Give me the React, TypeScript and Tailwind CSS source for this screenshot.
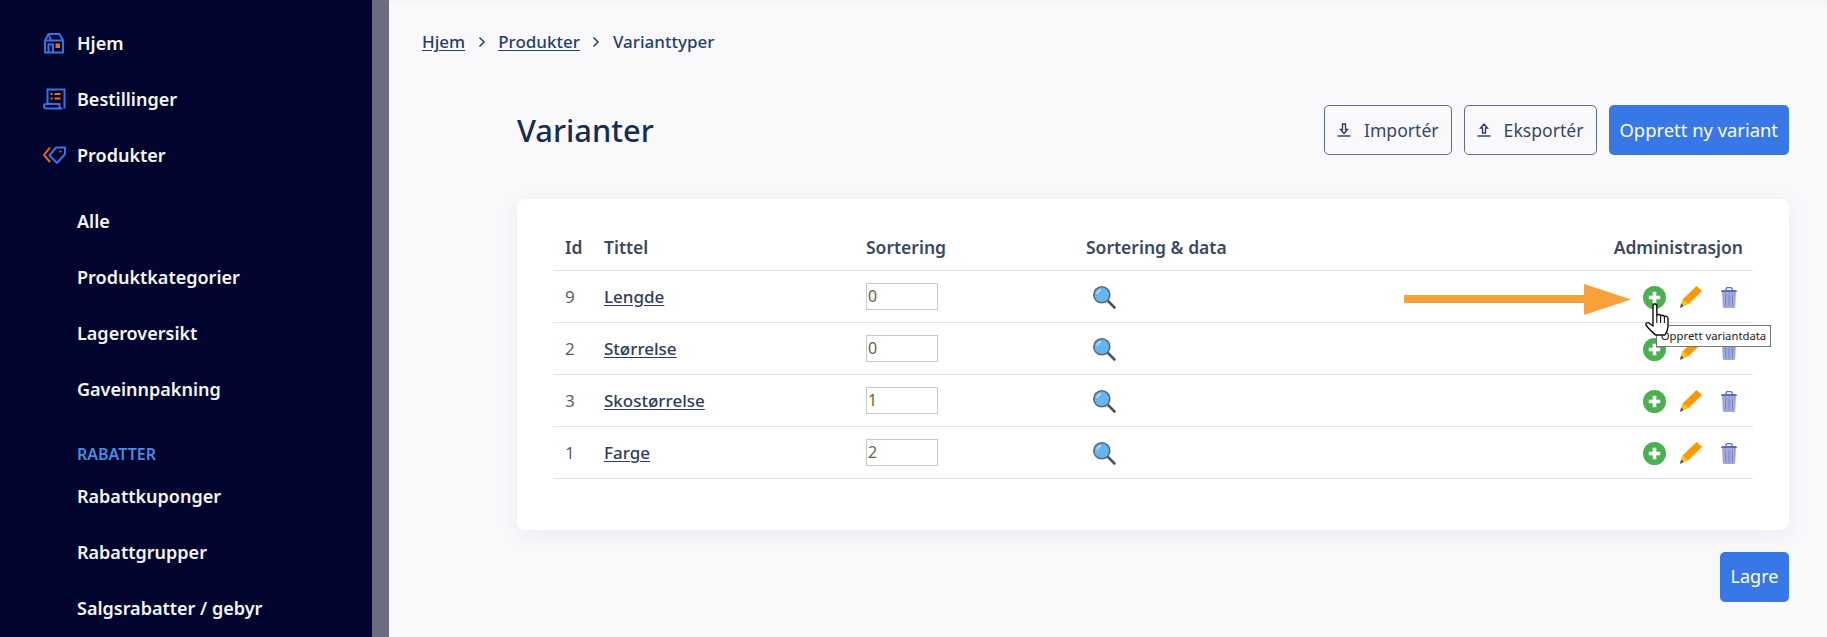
const sideMain = [
  { label: "Hjem", icon: <HomeIcon /> },
  { label: "Bestillinger", icon: <OrdersIcon /> },
  { label: "Produkter", icon: <TagIcon /> },
];
const sideProducts = ["Alle", "Produktkategorier", "Lageroversikt", "Gaveinnpakning"];
const sideDiscounts = ["Rabattkuponger", "Rabattgrupper", "Salgsrabatter / gebyr"];

const rows = [
  { id: 9, title: "Lengde", sort: "0" },
  { id: 2, title: "Størrelse", sort: "0" },
  { id: 3, title: "Skostørrelse", sort: "1" },
  { id: 1, title: "Farge", sort: "2" },
];

function HomeIcon() {
  return (
    <svg width="22" height="22" viewBox="0 0 22 22" fill="none">
      <path d="M2 8.5 5.5 2h11L20 8.5V20.5H2Z" stroke="#3474e0" strokeWidth="2" strokeLinejoin="round" />
      <path d="M2 8.5h18M5.5 2 8 8.5M5.5 20V12.5h4.5V20" stroke="#3474e0" strokeWidth="2" />
      <rect x="12.5" y="11.5" width="4.5" height="4.5" fill="#f26b0f" />
    </svg>
  );
}

function OrdersIcon() {
  return (
    <svg width="23" height="22" viewBox="0 0 23 22" fill="none">
      <path d="M4.5 16V1.5h17V20.5" stroke="#3474e0" strokeWidth="2" />
      <path d="M1 18c0-1.5.8-2 2-2h13.5v2.500c0 1.300.8 2 2 2H3c-1.300 0-2-1-2-2.500Z" stroke="#3474e0" strokeWidth="2" strokeLinejoin="round" />
      <path d="M7.500 6h2M11.500 6h6M7.500 10.500h2M11.500 10.500h6" stroke="#f26b0f" strokeWidth="2" />
    </svg>
  );
}

function TagIcon() {
  return (
    <svg width="23" height="18" viewBox="0 0 23 18" fill="none">
      <path d="M7 1.500 1 9l6 7" stroke="#f26b0f" strokeWidth="2" />
      <path d="M13 1.500h9v6.500l-8 9L6.500 9.500Z" stroke="#3474e0" strokeWidth="2" strokeLinejoin="round" />
      <circle cx="17.500" cy="5.500" r="1" fill="#f26b0f" />
    </svg>
  );
}

function PlusIcon() {
  return (
    <svg width="23" height="23" viewBox="0 0 23 23">
      <circle cx="11.500" cy="11.500" r="11.500" fill="#4caf50" />
      <path d="M9.700 5.800h3.600v3.900h3.900v3.600h-3.900v3.900H9.700v-3.900H5.800V9.700h3.900Z" fill="#fff" />
    </svg>
  );
}

function PencilIcon() {
  return (
    <svg width="22" height="22" viewBox="0 0 22 22">
      <path d="M16.500 0 22 5 8 18.500 2.500 13.500Z" fill="#ff9800" />
      <path d="M2.500 13.500 8 18.500 4 20 1 17.500Z" fill="#ffc107" />
      <path d="M1 17.500 4 20 0 22Z" fill="#4e4e4e" />
    </svg>
  );
}

function TrashIcon() {
  return (
    <svg width="16" height="21" viewBox="0 0 16 21">
      <path d="M1 5h14l-.8 14.500c0 .9-.6 1.500-1.500 1.500H3.300c-.9 0-1.500-.6-1.500-1.500Z" fill="#9fa8da" />
      <path d="M4.500 7.500v11M8 7.500v11M11.500 7.500v11" stroke="#7986cb" strokeWidth="1" />
      <path d="M0 5c0-1.200.6-2 1.800-2h12.400C15.400 3 16 3.800 16 5Z" fill="#5c6bc0" />
      <path d="M5 3.500V2c0-.8.5-1.300 1.300-1.300h3.400c.8 0 1.300.5 1.300 1.300v1.500" fill="none" stroke="#5c6bc0" strokeWidth="1.300" />
    </svg>
  );
}

function SearchIcon() {
  return (
    <svg width="23" height="23" viewBox="0 0 23 23">
      <path d="M13.500 13.500 21.500 21.500" stroke="#4a5560" strokeWidth="2.600" strokeLinecap="round" />
      <circle cx="8.800" cy="8.800" r="8" fill="#64b5f6" stroke="#5a6a78" strokeWidth="1.600" />
      <path d="M4 8a5 5 0 0 1 4-4" fill="none" stroke="#bbdefb" strokeWidth="1.500" />
    </svg>
  );
}

function HandCursor() {
  return (
    <svg width="27" height="34" viewBox="0 0 27 34">
      <path
        d="M8 3c0-2.600 3.800-2.600 3.800 0v9.500c.8-1.500 3.500-1.300 3.800.5.800-1.300 3.500-1 3.800.8.800-1 3.400-.7 3.600 1.400v8c0 3.500-1.300 6-3 8.800H10.500C7.500 29 4 26.500 1.300 22.500c-1.300-2 1-3.800 3-2.300L8 23Z"
        fill="#fff"
        stroke="#111"
        strokeWidth="1.400"
        strokeLinejoin="round"
      />
      <path d="M11.800 12.500V20M15.600 13v7M19.400 13.800V20" stroke="#111" strokeWidth="1.100" />
    </svg>
  );
}

function SideLink({ label, icon }: { label: string; icon?: React.ReactNode }) {
  return (
    <a className="flex h-14 items-center text-[18px] font-semibold text-[#f4f5fb]">
      <span className="flex w-[34px] items-center">{icon}</span>
      {label}
    </a>
  );
}

function OutlineButton({ label, up }: { label: string; up?: boolean }) {
  return (
    <button className="flex h-[50px] items-center gap-[13px] rounded-[5px] border border-[#5d6b8c] pl-[12px] pr-[12px] text-[17.6px] text-[#37466b]">
      <svg width="14" height="14" viewBox="0 0 14 14" fill="none" stroke="#26385f">
        <path d="M0.500 13h13" strokeWidth="1.400" />
        {up ? (
          <path d="M7 1 10.500 5H8.500V10h-3V5H3.500Z" strokeWidth="1.300" />
        ) : (
          <path d="M7 10.500 10.500 6.500H8.500V1h-3V6.500H3.500Z" strokeWidth="1.300" />
        )}
      </svg>
      {label}
    </button>
  );
}

export default function App() {
  return (
    <div
      className="flex h-[637px] w-[1827px] overflow-hidden bg-[#f9f9fc]"
      style={{ fontFamily: '"Noto Sans", sans-serif' }}
    >
      {/* sidebar */}
      <aside className="h-full w-[372px] shrink-0 bg-[#02062e] pl-[43px] pt-[15px]">
        {sideMain.map((item) => (
          <SideLink key={item.label} label={item.label} icon={item.icon} />
        ))}
        <div className="mt-[10px]">
          {sideProducts.map((label) => (
            <SideLink key={label} label={label} />
          ))}
        </div>
        <div className="ml-[34px] mt-[25px] flex h-[24px] items-center text-[16px] font-semibold text-[#4c8ade]">
          RABATTER
        </div>
        <div className="mt-[2px]">
          {sideDiscounts.map((label) => (
            <SideLink key={label} label={label} />
          ))}
        </div>
      </aside>
      <div className="h-full w-[17px] shrink-0 bg-[#6b6c7e]" />

      {/* main */}
      <main className="flex-1 pr-[38px] shadow-[inset_0_6px_6px_-6px_rgba(0,0,0,0.06)]">
        <nav className="flex h-[84px] items-center pl-[33px] text-[17px] font-medium text-[#24406f]">
          <a className="underline underline-offset-2">Hjem</a>
          <svg className="mx-[12.5px]" width="8" height="12" viewBox="0 0 8 12" fill="none" stroke="#24406f" strokeWidth="1.500">
            <path d="m1.500 1.500 4.500 4.500-4.500 4.500" />
          </svg>
          <a className="underline underline-offset-2">Produkter</a>
          <svg className="mx-[12.5px]" width="8" height="12" viewBox="0 0 8 12" fill="none" stroke="#24406f" strokeWidth="1.500">
            <path d="m1.500 1.500 4.500 4.500-4.500 4.500" />
          </svg>
          <span>Varianttyper</span>
        </nav>

        <div className="ml-[128px]">
          <div className="mt-[21px] flex items-center justify-between">
            <h1 className="text-[30.8px] font-medium text-[#152c55]">Varianter</h1>
            <div className="flex gap-[12px]">
              <OutlineButton label="Importér" />
              <OutlineButton label="Eksportér" up />
              <button className="h-[50px] rounded-[5px] bg-[#3778e6] px-[11px] text-[18.4px] text-white">
                Opprett ny variant
              </button>
            </div>
          </div>

          <section className="relative mt-[44px] rounded-[8px] bg-white px-[36px] pb-[51px] pt-[31px] shadow-[0_4px_20px_rgba(30,40,80,0.07)]">
            <table className="w-full border-collapse text-left text-[17px] text-[#5a5f6e]">
              <thead>
                <tr className="h-[40px] border-b border-[#e2e2e8] align-bottom text-[17.5px] text-[#3a4766]">
                  <th className="w-[51px] pb-[9px] pl-[12px] font-semibold">Id</th>
                  <th className="w-[262px] pb-[9px] font-semibold">Tittel</th>
                  <th className="w-[220px] pb-[9px] font-semibold">Sortering</th>
                  <th className="pb-[9px] font-semibold">Sortering &amp; data</th>
                  <th className="pb-[9px] pr-[10px] text-right font-semibold">Administrasjon</th>
                </tr>
              </thead>
              <tbody>
                {rows.map((row) => (
                  <tr key={row.id} className="h-[52px] border-b border-[#e2e2e8]">
                    <td className="pl-[12px] pt-[2px]">{row.id}</td>
                    <td className="pt-[2px]">
                      <a className="font-medium text-[#2f3c5e] underline underline-offset-2">{row.title}</a>
                    </td>
                    <td>
                      <input
                        readOnly
                        value={row.sort}
                        className="block h-[27px] w-[72px] border border-[#c9c9c9] bg-white pl-[1px] text-[16px] text-[#6b5f50]"
                      />
                    </td>
                    <td className="pt-[2px]">
                      <span className="ml-[7px] flex w-[23px]">
                        <SearchIcon />
                      </span>
                    </td>
                    <td className="pt-[2px]">
                      <div className="flex items-center justify-end gap-[13px] pr-[16px]">
                        <PlusIcon />
                        <span className="ml-[1px]"><PencilIcon /></span>
                        <span className="ml-[6px]"><TrashIcon /></span>
                      </div>
                    </td>
                  </tr>
                ))}
              </tbody>
            </table>

            {/* annotation arrow */}
            <svg className="absolute left-[887px] top-[85px]" width="227" height="31" viewBox="0 0 227 31">
              <path d="M0 11h180V0l47 15.500-47 15.500V19H0Z" fill="#f9a03a" />
            </svg>
            <div className="absolute left-[1139px] top-[126px] flex h-[22px] w-[115px] items-center justify-center whitespace-nowrap border border-[#777] bg-white text-[11.3px] text-[#222]">
              Opprett variantdata
            </div>
            <div className="absolute left-[1128px] top-[104px]">
              <HandCursor />
            </div>
          </section>

          <div className="mt-[22px] flex justify-end">
            <button className="h-[50px] w-[69px] rounded-[5px] bg-[#3778e6] text-[18px] text-white">Lagre</button>
          </div>
        </div>
      </main>
    </div>
  );
}
